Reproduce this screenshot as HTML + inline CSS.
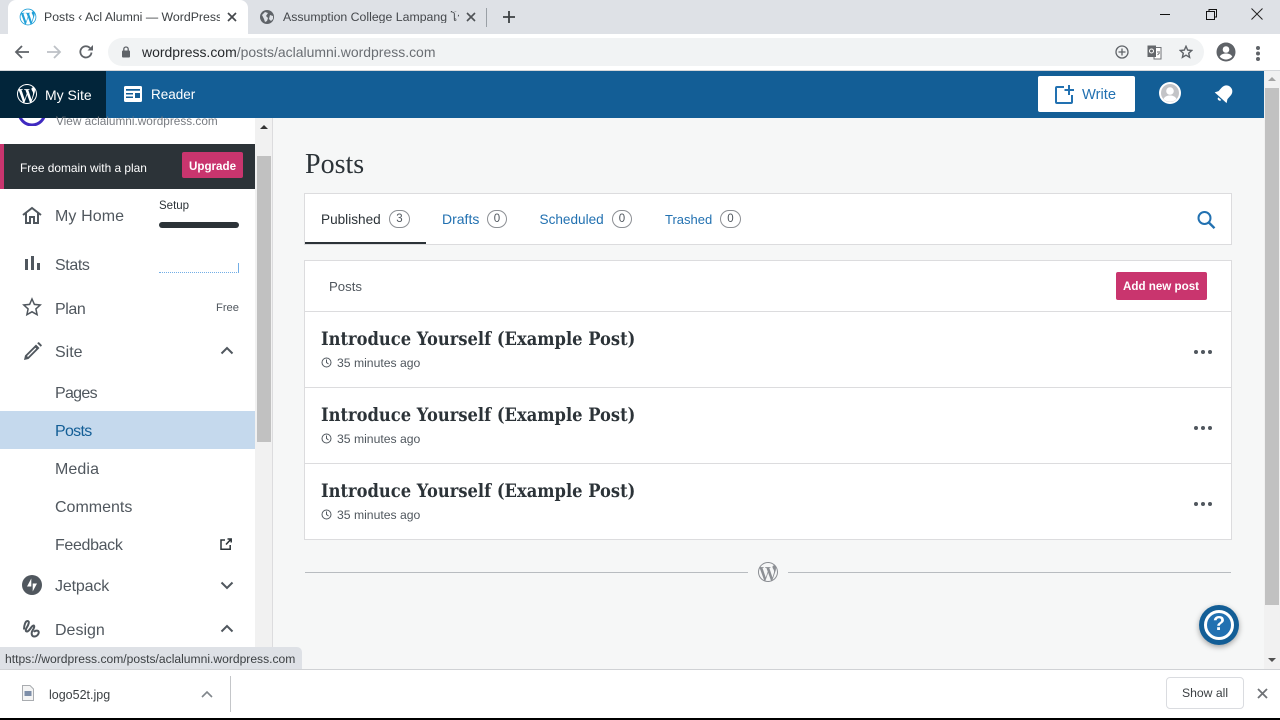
<!DOCTYPE html>
<html><head><meta charset="utf-8"><title>Posts</title>
<style>
*{box-sizing:border-box}
html,body{margin:0;padding:0;width:1280px;height:720px;overflow:hidden;background:#fff;font-family:"Liberation Sans","Noto Sans CJK SC",sans-serif}
.a{position:absolute}
.t{position:absolute;white-space:nowrap;line-height:1}
svg{position:absolute;display:block}
.s{font-family:"Liberation Serif","DejaVu Serif",serif}
.pt{font-family:"DejaVu Serif",serif;font-weight:700;font-size:18.5px;color:#2c3338;left:321px;transform:scaleX(.882);transform-origin:0 0}
.tm{font-size:12.2px;color:#50575e;left:337px}
.nav{font-size:16px;color:#50575e;left:55px}
.badge{position:absolute;height:18px;border:1px solid #8c8f94;border-radius:9px;font-size:11.5px;line-height:16px;text-align:center;color:#50575e;top:210px}
</style></head><body>
<svg width="0" height="0" style="position:absolute"><defs>
<symbol id="wp" viewBox="0 0 24 24"><path d="M12 2C6.486 2 2 6.486 2 12s4.486 10 10 10 10-4.486 10-10S17.514 2 12 2zM3.009 12c0-1.303.28-2.54.78-3.658l4.288 11.749C5.08 18.634 3.009 15.559 3.009 12zM12 20.991c-.883 0-1.735-.13-2.54-.366l2.697-7.836 2.763 7.57c.018.045.04.086.064.124-.934.329-1.938.508-2.984.508zm1.239-13.207c.541-.028 1.029-.085 1.029-.085.485-.058.428-.77-.057-.742 0 0-1.458.115-2.4.115-.885 0-2.372-.115-2.372-.115-.485-.028-.542.712-.057.742 0 0 .459.057.943.085l1.402 3.841-1.969 5.904L6.44 7.784c.542-.028 1.03-.085 1.03-.085.484-.058.427-.77-.058-.742 0 0-1.457.115-2.399.115-.169 0-.368-.004-.58-.011C6.042 4.633 8.851 3.009 12 3.009c2.346 0 4.484.897 6.084 2.366-.039-.002-.077-.007-.117-.007-.885 0-1.513.771-1.513 1.599 0 .742.428 1.37.885 2.112.343.6.743 1.371.743 2.484 0 .771-.296 1.666-.685 2.913l-.898 3.001-3.26-9.693zm3.281 11.986l2.745-7.936c.513-1.283.684-2.309.684-3.221 0-.331-.022-.638-.061-.925.702 1.281 1.102 2.751 1.102 4.312 0 3.315-1.797 6.21-4.47 7.77z"/></symbol>
</defs></svg>

<!-- tab strip -->
<div class="a" style="left:0;top:0;width:1280px;height:34px;background:#dee1e6"></div>
<div class="a" style="left:8px;top:0;width:240px;height:34px;background:#fff;border-radius:8px 8px 0 0"></div>
<svg style="left:18px;top:7px;fill:#21a0d8" width="20" height="20" viewBox="0 0 24 24"><use href="#wp"/></svg>
<div class="t" style="left:44px;top:11px;font-size:12.3px;color:#3c4043;width:176px;overflow:hidden">Posts ‹ Acl Alumni — WordPress.com</div>
<svg style="left:226px;top:11px" width="12" height="12" viewBox="0 0 12 12"><path d="M2 2l8 8M10 2l-8 8" stroke="#45484c" stroke-width="1.7"/></svg>
<svg style="left:260px;top:10px" width="14" height="14" viewBox="0 0 14 14"><circle cx="7" cy="7" r="7" fill="#5f6368"/><path d="M2 5l3-3 3 1-2 3 2 2-1 3-2 1-1-3zM10 5l3 1 0 3-2 2-2-2z" fill="#dee1e6"/></svg>
<div class="t" style="left:283px;top:11px;font-size:12.3px;color:#45484c;width:176px;overflow:hidden">Assumption College Lampang โรงเรียน</div>
<svg style="left:465px;top:11px" width="12" height="12" viewBox="0 0 12 12"><path d="M2 2l8 8M10 2l-8 8" stroke="#4f5256" stroke-width="1.6"/></svg>
<div class="a" style="left:486px;top:8px;width:1px;height:19px;background:#9aa0a6"></div>
<svg style="left:502px;top:10px" width="14" height="14" viewBox="0 0 14 14"><path d="M7 1v12M1 7h12" stroke="#3c4043" stroke-width="1.8"/></svg>
<!-- window controls -->
<div class="a" style="left:1160px;top:14px;width:10px;height:1px;background:#111"></div>
<svg style="left:1205px;top:8px" width="13" height="13" viewBox="0 0 13 13" fill="none" stroke="#111"><rect x="1.5" y="3.5" width="8" height="8"/><path d="M4 3V1.5h7.5V9H10"/></svg>
<svg style="left:1251px;top:8px" width="12" height="12" viewBox="0 0 12 12"><path d="M.5.5l11 11M11.500.5l-11 11" stroke="#222" stroke-width="1"/></svg>

<!-- toolbar -->
<div class="a" style="left:0;top:34px;width:1280px;height:37px;background:#fff"></div>
<svg style="left:14px;top:44px" width="16" height="16" viewBox="0 0 16 16" fill="none" stroke="#5f6368" stroke-width="1.8"><path d="M15 8H2M8 2L2 8l6 6"/></svg>
<svg style="left:46px;top:44px" width="16" height="16" viewBox="0 0 16 16" fill="none" stroke="#bdc1c6" stroke-width="1.8"><path d="M1 8h13M8 2l6 6-6 6"/></svg>
<svg style="left:78px;top:44px" width="16" height="16" viewBox="0 0 16 16" fill="none"><path d="M13.500 8.500A5.600 5.600 0 1 1 12 4" stroke="#5f6368" stroke-width="1.8"/><path d="M9.500 6.500H15V1z" fill="#5f6368"/></svg>
<div class="a" style="left:108px;top:38px;width:1096px;height:28px;background:#f1f3f4;border-radius:14px"></div>
<svg style="left:121px;top:46px" width="11" height="12" viewBox="0 0 11 12"><rect x="1" y="4.500" width="8" height="7" rx="1" fill="#5f6368"/><path d="M2.800 5V3.200a2.200 2.200 0 0 1 4.400 0V5" fill="none" stroke="#5f6368" stroke-width="1.300"/></svg>
<div class="t" style="left:142px;top:46px;font-size:13.97px;color:#6a6e73"><span style="color:#26292c">wordpress.com</span>/posts/aclalumni.wordpress.com</div>
<svg style="left:1115px;top:45px" width="14" height="14" viewBox="0 0 14 14" fill="none" stroke="#5f6368" stroke-width="1.300"><circle cx="7" cy="7" r="6"/><path d="M7 3.500v7M3.500 7h7"/></svg>
<svg style="left:1147px;top:45px" width="15" height="15" viewBox="0 0 15 15"><path d="M7 2.500h7v11.500H7z" fill="#fff" stroke="#6f7276"/><path d="M.5.500H9v11.500H.5z" fill="#65686c"/><circle cx="4.500" cy="6" r="2" fill="none" stroke="#fff"/><path d="M10 7h3M10.500 10l2-2" stroke="#6f7276"/></svg>
<svg style="left:1179px;top:45px" width="14" height="14" viewBox="0 0 14 14" fill="none" stroke="#5f6368" stroke-width="1.400"><path d="M7 1.300l1.700 3.800 4 .4-3 2.700.9 4.100L7 10.200l-3.600 2.100.9-4.100-3-2.700 4-.4z"/></svg>
<svg style="left:1216px;top:42px" width="20" height="20" viewBox="0 0 20 20"><circle cx="10" cy="10" r="9.500" fill="#5f6368"/><circle cx="10" cy="7.500" r="3.300" fill="#fff"/><path d="M3.700 14.500c1.500-2.300 3.800-3 6.300-3s4.800.7 6.300 3c-1.500 1.800-3.800 3-6.300 3s-4.800-1.200-6.300-3z" fill="#fff"/></svg>
<div class="a" style="left:1256px;top:46px;width:4px;height:4px;background:#5f6368;border-radius:2px;box-shadow:0 5.500px 0 #5f6368,0 11px 0 #5f6368"></div>
<div class="a" style="left:0;top:70px;width:1280px;height:1px;background:#d5d7da"></div>

<!-- masterbar -->
<div class="a" style="left:0;top:71px;width:1264px;height:47px;background:#135e96"></div>
<div class="a" style="left:0;top:71px;width:106px;height:47px;background:#02253a"></div>
<svg style="left:15px;top:82px;fill:#fff" width="24" height="24" viewBox="0 0 24 24"><use href="#wp"/></svg>
<div class="t" style="left:45px;top:88px;font-size:14px;color:#fff">My Site</div>
<svg style="left:124px;top:86px" width="18" height="16" viewBox="0 0 18 16"><rect width="18" height="16" rx="1.500" fill="#fff"/><path d="M2 3h14v1.700H2zM2 7h7v1.500H2zM2 10.500h7V12H2z" fill="#135e96"/><rect x="11" y="7" width="5" height="5" fill="#135e96"/></svg>
<div class="t" style="left:151px;top:88px;font-size:13.5px;color:#fff">Reader</div>
<div class="a" style="left:1038px;top:76px;width:97px;height:36px;background:#fff;border-radius:2px"></div>
<svg style="left:1055px;top:84px" width="20" height="20" viewBox="0 0 20 20" fill="none" stroke="#2271b1" stroke-width="2"><path d="M9 3H2a1 1 0 0 0-1 1v14a1 1 0 0 0 1 1h14a1 1 0 0 0 1-1v-7"/><path d="M14 1v10M9.500 6H19" /></svg>
<div class="t" style="left:1082px;top:88px;font-size:14.7px;color:#2271b1">Write</div>
<svg style="left:1159px;top:82px" width="22" height="22" viewBox="0 0 22 22"><circle cx="11" cy="11" r="11" fill="#fff"/><circle cx="11" cy="11" r="9" fill="#c3c4c7"/><circle cx="11" cy="9" r="3.800" fill="#fff"/><path d="M4.500 17c1.500-2.800 3.800-3.500 6.500-3.500s5 .7 6.500 3.500a9 9 0 0 1-13 0z" fill="#fff"/></svg>
<svg style="left:1214px;top:84px" width="20" height="20" viewBox="0 0 20 20" fill="#fff"><g transform="rotate(42 10 10)"><path d="M10 .5c-3.600 0-6 2.800-6 6.500v4.500L2 15h16l-2-3.500V7c0-3.700-2.400-6.500-6-6.500z"/><path d="M8 16.300h4a2 2 0 0 1-4 0z"/></g></svg>

<!-- main scrollbar -->
<div class="a" style="left:1264px;top:71px;width:16px;height:598px;background:#f1f1f1"></div>
<div class="a" style="left:1265px;top:88px;width:14px;height:517px;background:#c1c1c1"></div>
<div class="a" style="left:1268px;top:77px;width:0;height:0;border:4px solid transparent;border-top:0;border-bottom:4px solid #a3a3a3"></div>
<div class="a" style="left:1268px;top:658px;width:0;height:0;border:4px solid transparent;border-bottom:0;border-top:4px solid #505050"></div>

<!-- content bg -->
<div class="a" style="left:272px;top:118px;width:992px;height:551px;background:#f6f7f7;border-left:1px solid #dcdcde"></div>
<div class="t s" style="left:305px;top:151px;font-size:28px;color:#2c3338">Posts</div>

<!-- tabs card -->
<div class="a" style="left:304px;top:193px;width:928px;height:52px;background:#fff;border:1px solid #dcdcde"></div>
<div class="a" style="left:305px;top:242px;width:121px;height:2px;background:#2c3338"></div>
<div class="t" style="left:321px;top:213px;font-size:13.6px;color:#2c3338">Published</div>
<div class="badge" style="left:389px;width:21px">3</div>
<div class="t" style="left:442px;top:212px;font-size:14px;color:#2271b1">Drafts</div>
<div class="badge" style="left:487px;width:20px">0</div>
<div class="t" style="left:539.500px;top:213px;font-size:13.6px;color:#2271b1">Scheduled</div>
<div class="badge" style="left:612px;width:20px">0</div>
<div class="t" style="left:665px;top:213px;font-size:13px;color:#2271b1">Trashed</div>
<div class="badge" style="left:720px;width:21px">0</div>
<svg style="left:1196px;top:210px" width="20" height="20" viewBox="0 0 20 20" fill="none" stroke="#2271b1" stroke-width="2"><circle cx="8.500" cy="8" r="6"/><path d="M12.800 12.500l5.700 5.700" stroke-width="2.400"/></svg>

<!-- posts card -->
<div class="a" style="left:304px;top:260px;width:928px;height:280px;background:#fff;border:1px solid #dcdcde"></div>
<div class="t" style="left:329px;top:280px;font-size:13.2px;color:#50575e">Posts</div>
<div class="a" style="left:1116px;top:272px;width:91px;height:28px;background:#c9356e;border-radius:2px"></div>
<div class="t" style="left:1123px;top:281px;font-size:11.6px;font-weight:700;color:#fff">Add new post</div>
<div class="a" style="left:305px;top:311px;width:926px;height:1px;background:#dcdcde"></div>
<div class="a" style="left:305px;top:387px;width:926px;height:1px;background:#dcdcde"></div>
<div class="a" style="left:305px;top:463px;width:926px;height:1px;background:#dcdcde"></div>

<div class="t pt" style="top:331px">Introduce Yourself (Example Post)</div>
<svg style="left:321px;top:357px" width="11" height="11" viewBox="0 0 11 11" fill="none" stroke="#50575e"><circle cx="5.500" cy="5.500" r="4.500"/><path d="M5.500 2.500v3l2 1.500"/></svg>
<div class="t tm" style="top:357px">35 minutes ago</div>
<div class="a" style="left:1194px;top:350px;width:4px;height:4px;border-radius:50%;background:#50575e;box-shadow:7px 0 0 #50575e,14px 0 0 #50575e"></div>

<div class="t pt" style="top:407px">Introduce Yourself (Example Post)</div>
<svg style="left:321px;top:433px" width="11" height="11" viewBox="0 0 11 11" fill="none" stroke="#50575e"><circle cx="5.500" cy="5.500" r="4.500"/><path d="M5.500 2.500v3l2 1.500"/></svg>
<div class="t tm" style="top:433px">35 minutes ago</div>
<div class="a" style="left:1194px;top:426px;width:4px;height:4px;border-radius:50%;background:#50575e;box-shadow:7px 0 0 #50575e,14px 0 0 #50575e"></div>

<div class="t pt" style="top:483px">Introduce Yourself (Example Post)</div>
<svg style="left:321px;top:509px" width="11" height="11" viewBox="0 0 11 11" fill="none" stroke="#50575e"><circle cx="5.500" cy="5.500" r="4.500"/><path d="M5.500 2.500v3l2 1.500"/></svg>
<div class="t tm" style="top:509px">35 minutes ago</div>
<div class="a" style="left:1194px;top:502px;width:4px;height:4px;border-radius:50%;background:#50575e;box-shadow:7px 0 0 #50575e,14px 0 0 #50575e"></div>

<!-- footer -->
<div class="a" style="left:305px;top:572px;width:443px;height:1px;background:#b8bcc0"></div>
<div class="a" style="left:788px;top:572px;width:443px;height:1px;background:#b8bcc0"></div>
<svg style="left:756px;top:560px;fill:#8c8f94" width="24" height="24" viewBox="0 0 24 24"><use href="#wp"/></svg>

<!-- help -->
<div class="a" style="left:1199px;top:605px;width:40px;height:40px;border-radius:50%;background:#135e96;box-shadow:0 2px 6px rgba(0,0,0,.35)"></div>
<div class="a" style="left:1204px;top:610px;width:30px;height:30px;border-radius:50%;background:#2271b1;border:3px solid #fff"></div>
<div class="t" style="left:1204px;top:614px;width:30px;text-align:center;font-size:20px;font-weight:700;color:#fff">?</div>

<!-- sidebar -->
<div class="a" style="left:0;top:118px;width:255px;height:551px;background:#fff"></div>
<div class="a" style="left:255px;top:118px;width:17px;height:551px;background:#f1f1f1"></div>
<div class="a" style="left:257px;top:156px;width:14px;height:286px;background:#c1c1c1"></div>
<div class="a" style="left:260px;top:125px;width:0;height:0;border:4px solid transparent;border-top:0;border-bottom:4px solid #333"></div>
<svg style="left:18px;top:118px" width="28" height="8" viewBox="0 0 28 8"><path d="M1-6a13 13 0 0 0 26 0" fill="none" stroke="#3f2ac0" stroke-width="3"/></svg>
<div class="t" style="left:56px;top:116px;font-size:11.8px;color:#787c82">View aclalumni.wordpress.com</div>

<div class="a" style="left:0;top:144px;width:255px;height:45px;background:#2c3338;border-left:4px solid #c9356e"></div>
<div class="t" style="left:20px;top:163px;font-size:11.9px;color:#fff">Free domain with a plan</div>
<div class="a" style="left:182px;top:152px;width:61px;height:26px;background:#c9356e;border-radius:2px"></div>
<div class="t" style="left:189px;top:161px;font-size:11.6px;font-weight:700;color:#fff">Upgrade</div>

<svg style="left:22px;top:206px" width="20" height="18" viewBox="0 0 20 18" fill="none" stroke="#50575e" stroke-width="2"><path d="M1 9l9-7 9 7M4 7v10h4v-6h4v6h4V7"/></svg>
<div class="t nav" style="top:209px;letter-spacing:.1px">My Home</div>
<div class="t" style="left:159px;top:201px;font-size:11.500px;color:#2c3338">Setup</div>
<div class="a" style="left:159px;top:222px;width:80px;height:6px;border-radius:3px;background:#2c3338"></div>

<svg style="left:25px;top:256px" width="15" height="14" viewBox="0 0 15 14" fill="#50575e"><rect y="3" width="3" height="11"/><rect x="6" width="3" height="14"/><rect x="12" y="7" width="3" height="7"/></svg>
<div class="t nav" style="top:258px;letter-spacing:-.4px">Stats</div>
<div class="a" style="left:159px;top:272px;width:80px;height:1px;border-bottom:1px dotted #72aee6"></div>
<div class="a" style="left:238px;top:263px;width:1px;height:10px;background:#72aee6"></div>

<svg style="left:22px;top:297px" width="20" height="20" viewBox="0 0 20 20" fill="none" stroke="#50575e" stroke-width="1.500"><path d="M10 2l2.400 5.400 5.800.6-4.300 3.900 1.200 5.800L10 14.800l-5.100 2.900 1.200-5.800L1.800 8l5.800-.6z"/></svg>
<div class="t nav" style="top:302px;letter-spacing:-.4px">Plan</div>
<div class="t" style="left:216px;top:303px;font-size:11.2px;color:#50575e">Free</div>

<svg style="left:23px;top:342px" width="19" height="19" viewBox="0 0 19 19" fill="none"><path d="M1 18l1-4.500L13 2.500l3.500 3.500L5.500 17z" fill="#50575e"/><path d="M4.500 14.500L12.800 6.200" stroke="#fff" stroke-width="1.300"/><path d="M14.200 1.300L15 .5a.9.9 0 0 1 1.300 0l2.200 2.200a.9.900 0 0 1 0 1.300l-.8.800z" fill="#50575e"/></svg>
<div class="t nav" style="top:345px">Site</div>
<svg style="left:220px;top:346px" width="14" height="9" viewBox="0 0 14 9" fill="none" stroke="#50575e" stroke-width="2"><path d="M1.500 7.500L7 2l5.500 5.500"/></svg>

<div class="t nav" style="top:386px;letter-spacing:-.7px">Pages</div>
<div class="a" style="left:0;top:411px;width:255px;height:38px;background:#c5d9ed"></div>
<div class="t nav" style="top:424px;color:#135e96;letter-spacing:-.7px">Posts</div>
<div class="t nav" style="top:462px;letter-spacing:.1px">Media</div>
<div class="t nav" style="top:500px">Comments</div>
<div class="t nav" style="top:538px;letter-spacing:-.35px">Feedback</div>
<svg style="left:220px;top:538px" width="12" height="12" viewBox="0 0 12 12" fill="none" stroke="#2c3338" stroke-width="1.500"><path d="M5 2H1v9.200h9.200V7M6 6.500L11 1.200M7.500 1H11.200V4.500"/></svg>

<svg style="left:22px;top:575px" width="20" height="20" viewBox="0 0 20 20"><circle cx="10" cy="10" r="10" fill="#50575e"/><path d="M9.300 3.500v8H5zM10.700 16.500v-8H15z" fill="#fff"/></svg>
<div class="t nav" style="top:579px;letter-spacing:-.15px">Jetpack</div>
<svg style="left:220px;top:581px" width="14" height="9" viewBox="0 0 14 9" fill="none" stroke="#50575e" stroke-width="2"><path d="M1.500 1.500L7 7l5.500-5.500"/></svg>

<svg style="left:23px;top:620px" width="19" height="18" viewBox="0 0 19 18" fill="none" stroke="#50575e" stroke-width="2"><path d="M1 9.500C1 5 2.500 1 4.500 1 7 1 5.500 5 3.500 8 2.500 10 2.500 11.500 4 11.500 6.500 11.500 8.500 5.500 10.500 5.500c1.500 0 .5 3-1 5-1.500 2.500-1 6 1.800 6 2.700 0 4.700-2.500 4.400-4.500-.4-2-3.700-1.700-4.700 0"/></svg>
<div class="t nav" style="top:623px">Design</div>
<svg style="left:220px;top:624px" width="14" height="9" viewBox="0 0 14 9" fill="none" stroke="#50575e" stroke-width="2"><path d="M1.500 7.500L7 2l5.500 5.500"/></svg>

<!-- status bubble -->
<div class="a" style="left:0;top:647px;width:302px;height:22px;background:#dee1e6;border-radius:0 5px 0 0"></div>
<div class="t" style="left:5px;top:653px;font-size:12.1px;color:#3c4043">https://wordpress.com/posts/aclalumni.wordpress.com</div>

<!-- download bar -->
<div class="a" style="left:0;top:669px;width:1280px;height:49px;background:#fff;border-top:1px solid #d0d2d5"></div>
<div class="a" style="left:0;top:718px;width:1280px;height:2px;background:#000"></div>
<svg style="left:22px;top:685px" width="12" height="16" viewBox="0 0 12 16"><path d="M.5.500H8L11.500 4v11.500H.5z" fill="#f4f4f4" stroke="#a9acb0"/><rect x="2.500" y="6" width="7" height="5" fill="#7d8ea8"/></svg>
<div class="t" style="left:49px;top:689px;font-size:12.500px;color:#3c4043">logo52t.jpg</div>
<svg style="left:201px;top:690px" width="12" height="8" viewBox="0 0 12 8" fill="none" stroke="#80868b" stroke-width="1.600"><path d="M1 7l5-5 5 5"/></svg>
<div class="a" style="left:230px;top:676px;width:1px;height:36px;background:#c4c6c9"></div>
<div class="a" style="left:1166px;top:677px;width:78px;height:32px;background:#fff;border:1px solid #dadce0;border-radius:4px"></div>
<div class="t" style="left:1182px;top:687px;font-size:12.2px;color:#3c4043">Show all</div>
<svg style="left:1257px;top:688px" width="11" height="11" viewBox="0 0 11 11"><path d="M1 1l9 9M10 1l-9 9" stroke="#6f7276" stroke-width="1.800"/></svg>
</body></html>
